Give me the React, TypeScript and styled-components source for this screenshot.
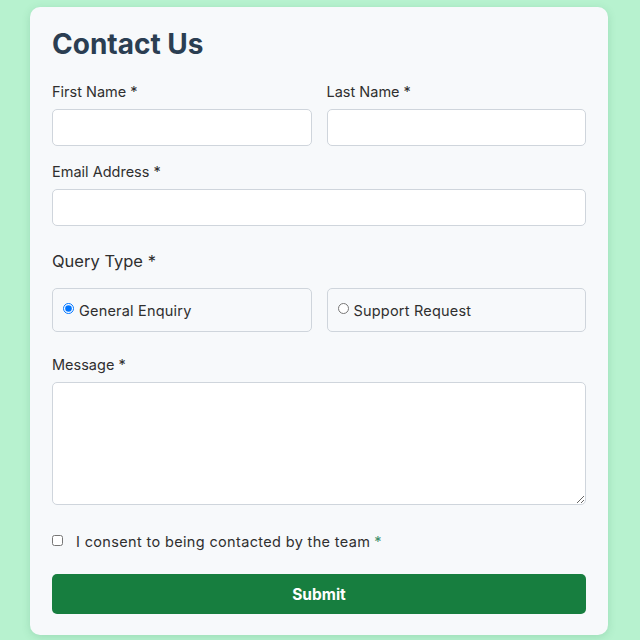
import * as React from 'react';
import styled, { createGlobalStyle } from 'styled-components';

const GlobalStyle = createGlobalStyle`
  html, body {
    margin: 0;
    padding: 0;
    background: #b7f2cf;
    font-family: Inter, "Noto Sans", Arial, sans-serif;
  }
`

const Page = styled.div`
  width: 640px;
  height: 640px;
  display: flex;
  padding: 7px 0 0 30px;
  box-sizing: border-box;
  overflow: hidden;
`

const Card = styled.form`
  width: 578px;
  height: 628px;
  box-sizing: border-box;
  background: #f7f9fb;
  border-radius: 10px;
  box-shadow: 0 2px 8px rgba(40, 120, 80, 0.18);
  padding: 21px 22px 0 22px;
  display: flex;
  flex-direction: column;
`

const Title = styled.h1`
  margin: 0 0 22px 0;
  font-size: 28px;
  font-weight: 700;
  color: #2b3e52;
  line-height: 32px;
`

const Row = styled.div`
  display: grid;
  grid-template-columns: 1fr 1fr;
  column-gap: 15px;
`

const Field = styled.div<{ $gap?: number }>`
  display: flex;
  flex-direction: column;
  margin-bottom: ${p => p.$gap ?? 16}px;
`

const Label = styled.label<{ $big?: boolean }>`
  font-size: ${p => (p.$big ? 16.5 : 14.5)}px;
  color: #2f2f2f;
  line-height: 20px;
  margin-bottom: ${p => (p.$big ? 17 : 7)}px;
`

const Input = styled.input`
  height: 37px;
  box-sizing: border-box;
  border: 1px solid #cfd5dc;
  border-radius: 5px;
  background: #fff;
  outline: none;
`

const RadioBox = styled.label`
  height: 44px;
  box-sizing: border-box;
  border: 1px solid #cfd5dc;
  border-radius: 5px;
  display: flex;
  align-items: center;
  padding-left: 10px;
  font-size: 14.5px;
  letter-spacing: 0.2px;
  color: #2f2f2f;
  gap: 3px;

  input {
    margin: 0 2px 4px 0;
    width: 11px;
    height: 11px;
  }
`

const TextArea = styled.textarea`
  height: 123px;
  box-sizing: border-box;
  border: 1px solid #cfd5dc;
  border-radius: 5px;
  background: #fff;
  outline: none;
`

const Consent = styled.label`
  display: flex;
  align-items: center;
  gap: 13px;
  font-size: 14.5px;
  letter-spacing: 0.35px;
  color: #2f2f2f;
  margin: 8px 0 24px 0;

  input {
    margin: 0 0 2px 0;
    width: 11px;
    height: 11px;
  }
`

const Star = styled.span`
  color: #3f8f6a;
  margin-left: 4px;
`

const SubmitBtn = styled.button`
  height: 40px;
  border: none;
  border-radius: 5px;
  background: #177e3f;
  color: #fff;
  font-family: inherit;
  font-size: 15.5px;
  font-weight: 700;
`

export default function App() {
  return (
    <>
      <GlobalStyle />
      <Page>
        <Card onSubmit={e => e.preventDefault()}>
          <Title>Contact Us</Title>
          <Row>
            <Field>
              <Label>First Name *</Label>
              <Input />
            </Field>
            <Field>
              <Label>Last Name *</Label>
              <Input />
            </Field>
          </Row>
          <Field $gap={25}>
            <Label>Email Address *</Label>
            <Input />
          </Field>
          <Field $gap={23}>
            <Label $big>Query Type *</Label>
            <Row>
              <RadioBox>
                <input type="radio" name="q" defaultChecked />
                General Enquiry
              </RadioBox>
              <RadioBox>
                <input type="radio" name="q" />
                Support Request
              </RadioBox>
            </Row>
          </Field>
          <Field $gap={20}>
            <Label>Message *</Label>
            <TextArea />
          </Field>
          <Consent>
            <input type="checkbox" />
            <span>
              I consent to being contacted by the team<Star>*</Star>
            </span>
          </Consent>
          <SubmitBtn type="submit">Submit</SubmitBtn>
        </Card>
      </Page>
    </>
  );
}
